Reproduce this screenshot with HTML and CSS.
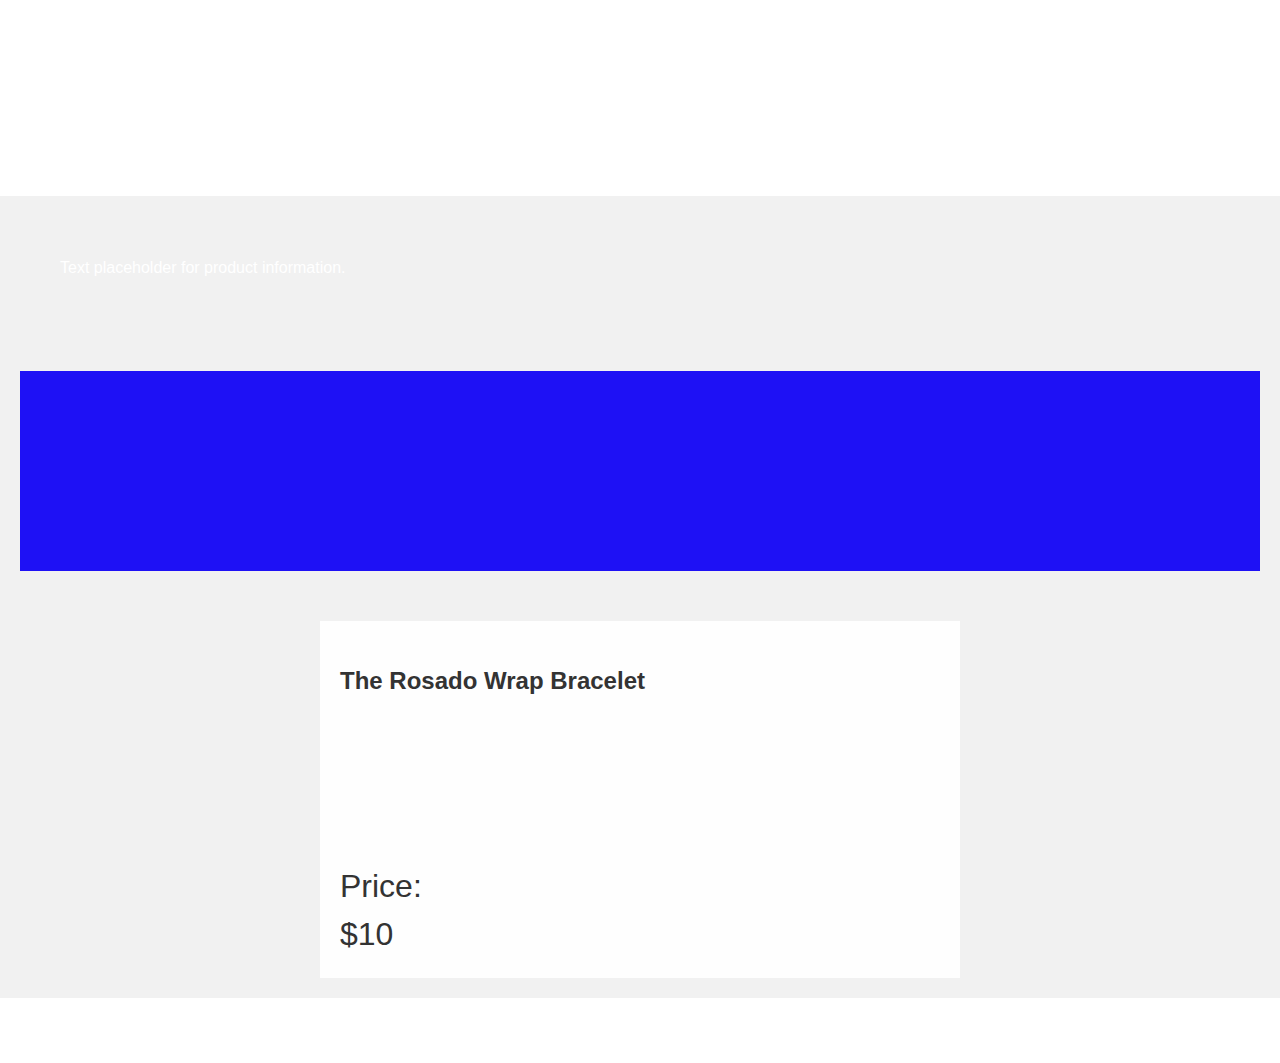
FILE: index.html
```html
<!DOCTYPE html>
<html>
<head>
<meta charset="utf-8">
<link rel="stylesheet" href="styles.css">
</head>
<body>
<header class="site-header"></header>
<main class="product">
  <section class="info">
    <p class="info-text">Text placeholder for product information.</p>
  </section>
  <div class="banner"></div>
  <div class="card">
    <h3 class="card-title">The Rosado Wrap Bracelet</h3>
    <div class="card-image"></div>
    <div class="price">
      <div>Price:</div>
      <div>$10</div>
    </div>
  </div>
</main>
<footer class="site-footer"></footer>
</body>
</html>
```
FILE: styles.css
```css
* { box-sizing: border-box; }
html, body { margin: 0; padding: 0; }
body {
  font-family: "Liberation Sans", Arial, sans-serif;
  color: #333;
  background: #fff;
}
.site-header { height: 196px; background: #fff; }
.product {
  background: #f1f1f1;
  padding-bottom: 20px;
  display: flow-root;
}
.info { padding: 63px 60px 0; height: 175px; }
.info-text {
  margin: 0;
  font-size: 16px;
  line-height: 18px;
  color: #fff;
}
.banner {
  margin: 0 20px;
  height: 200px;
  background: #1e11f5;
}
.card {
  width: 640px;
  margin: 50px auto 0;
  background: #fefefe;
  padding: 20px;
}
.card-title {
  margin: 26px 0 0;
  font-size: 24px;
  line-height: 28px;
  font-weight: bold;
}
.card-image { height: 167px; }
.price {
  font-size: 32px;
  line-height: 48px;
}
.site-footer { height: 65px; background: #fff; }
```
